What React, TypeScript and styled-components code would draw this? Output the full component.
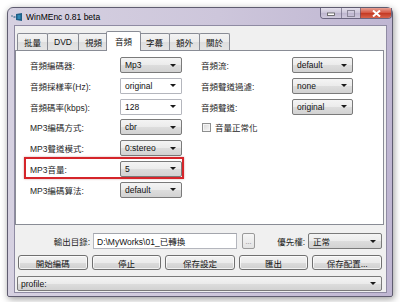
import React from 'react';
import styled, { createGlobalStyle, css } from 'styled-components';

const GlobalStyle = createGlobalStyle`
    html, body {
        margin: 0;
        padding: 0;
        background: #ffffff;
    }
    body {
        font-family: "Liberation Sans", "Noto Sans CJK TC", sans-serif;
        font-size: 8.5px;
        color: #1e1e1e;
    }
    * {
        box-sizing: border-box;
    }
`;

const Page = styled.div`
    width: 400px;
    height: 302px;
    padding: 7px 0 0 7px;
    overflow: hidden;
`;

const Window = styled.div`
    width: 386px;
    height: 290px;
    border: 1px solid #5f5c70;
    border-radius: 6px 6px 2px 2px;
    background: linear-gradient(to right, #d6d1e1, #cdc6db 55%, #bfb6d2);
    box-shadow: 1px 2px 7px rgba(0, 0, 0, 0.4);
    padding: 0 5px 3px 6px;
    display: flex;
    flex-direction: column;
`;

const TitleBar = styled.div`
    height: 17px;
    margin: 0 -5px 0 -3px;
    display: flex;
    align-items: center;
    flex-shrink: 0;
`;

const TitleText = styled.span`
    margin-left: 4px;
    font-size: 8.5px;
    color: #000;
    flex: 1;
`;

const CaptionGroup = styled.div`
    align-self: flex-start;
    display: flex;
    height: 11px;
    border: 1px solid #6b6680;
    border-top: none;
    border-radius: 0 0 4px 4px;
    overflow: hidden;
`;

const CaptionButton = styled.div<{ $w: number; $close?: boolean }>`
    width: ${(p) => p.$w}px;
    display: flex;
    align-items: center;
    justify-content: center;
    border-left: 1px solid rgba(90, 85, 110, 0.6);
    background: linear-gradient(#e4e0ec, #cbc5d9 50%, #bdb5cf 51%, #d0cadd);
    &:first-child {
        border-left: none;
    }
    ${(p) =>
        p.$close &&
        css`
            background: linear-gradient(#e8a195, #d4533f 50%, #c33822 51%, #d8634c);
        `}
`;

const Client = styled.div`
    flex: 1;
    background: #f0f0f0;
    border: 1px solid #8f8ba3;
    display: flex;
    flex-direction: column;
    padding: 5px 1px 0 0;
`;

const TabStrip = styled.div`
    display: flex;
    align-items: flex-end;
    height: 19px;
    padding-left: 2px;
`;

const Tab = styled.div<{ $active?: boolean }>`
    height: 17px;
    padding: 0 6px;
    margin-right: -1px;
    display: flex;
    align-items: center;
    border: 1px solid #898c95;
    border-bottom: none;
    border-radius: 2px 2px 0 0;
    background: linear-gradient(#f3f3f3, #ebebeb 50%, #dedede 51%, #e5e5e5);
    color: #111;
    ${(p) =>
        p.$active &&
        css`
            position: relative;
            z-index: 1;
            height: 20px;
            margin: 0 -2px -1px -2px;
            padding: 0 8px;
            background: #ffffff;
            padding-bottom: 2px;
        `}
`;

const Panel = styled.div`
    height: 175px;
    margin-right: 1px;
    border: 1px solid #898c95;
    background: #ffffff;
    padding: 6px 0 0 14px;
    display: flex;
    gap: 19px;
`;

const Column = styled.div`
    display: flex;
    flex-direction: column;
    gap: 4.8px;
`;

const Row = styled.div<{ $label: number; $field: number; $highlight?: boolean }>`
    display: grid;
    grid-template-columns: ${(p) => p.$label}px ${(p) => p.$field}px;
    align-items: center;
    height: 16px;
    ${(p) =>
        p.$highlight &&
        css`
            position: relative;
            &::after {
                content: '';
                position: absolute;
                inset: -4px -2px -2px -6px;
                border: 2px solid #d5252a;
                box-shadow: 0 0 2px rgba(120, 0, 0, 0.35);
            }
        `}
`;

const Label = styled.span`
    white-space: nowrap;
`;

const Combo = styled.div<{ $edit?: boolean; $w?: number }>`
    height: 16px;
    ${(p) => p.$w && `width: ${p.$w}px;`}
    display: flex;
    align-items: center;
    justify-content: space-between;
    padding: 0 5px 0 4px;
    border: 1px solid #7a7a7a;
    border-radius: 2px;
    background: linear-gradient(#f4f4f4, #ebebeb 50%, #dddddd 51%, #d2d2d2);
    color: #111;
    white-space: nowrap;
    ${(p) =>
        p.$edit &&
        css`
            background: #ffffff;
            border-color: #b4b6bd;
            border-radius: 1px;
        `}
`;

const Arrow = styled.span`
    width: 0;
    height: 0;
    border-left: 3px solid transparent;
    border-right: 3px solid transparent;
    border-top: 3px solid #1a1a1a;
`;

const CheckRow = styled.div`
    display: flex;
    align-items: center;
    gap: 4px;
    height: 16px;
    padding-left: 1px;
`;

const CheckBox = styled.span`
    width: 9px;
    height: 9px;
    border: 1px solid #8e8f8f;
    background: linear-gradient(135deg, #d8d8d8, #f7f7f7);
    box-shadow: inset 0 0 0 1px #f4f4f4;
`;

const Bottom = styled.div`
    display: flex;
    flex-direction: column;
    padding: 8px 3px 0 3px;
    gap: 6px;
`;

const OutputRow = styled.div`
    display: flex;
    align-items: center;
    height: 16px;
`;

const RightLabel = styled.span<{ $w: number }>`
    width: ${(p) => p.$w}px;
    text-align: right;
    margin-right: 3px;
    white-space: nowrap;
`;

const TextInput = styled.div`
    width: 144px;
    height: 16px;
    display: flex;
    align-items: center;
    padding-left: 3px;
    border: 1px solid #b4b6bd;
    border-top-color: #a3a5ac;
    background: #ffffff;
    color: #111;
    white-space: nowrap;
`;

const DotsButton = styled.div`
    width: 13px;
    height: 16px;
    margin-left: 5px;
    border: 1px solid #9a9a9a;
    border-radius: 2px;
    background: linear-gradient(#f6f6f6, #e3e3e3);
    color: #777;
    font-size: 7px;
    display: flex;
    align-items: center;
    justify-content: center;
`;

const Spacer = styled.div`
    flex: 1;
`;

const ButtonRow = styled.div`
    display: grid;
    grid-template-columns: repeat(5, 1fr);
    gap: 4px;
    height: 15px;
`;

const Button = styled.div`
    border: 1px solid #707070;
    border-radius: 3px;
    background: linear-gradient(#f2f2f2, #ebebeb 50%, #dddddd 51%, #cfcfcf);
    box-shadow: inset 0 0 0 1px rgba(255, 255, 255, 0.7);
    display: flex;
    align-items: center;
    justify-content: center;
    color: #111;
    white-space: nowrap;
`;

const ProfileCombo = styled(Combo)`
    height: 15px;
    margin-left: -1px;
    padding-left: 3px;
`;

const AppIcon = () => (
    <svg width="11" height="8" viewBox="0 0 11 8">
        <rect x="0" y="2" width="2" height="2" fill="#8fa3b8" />
        <rect x="2.5" y="3" width="2" height="2" fill="#6d8aa8" />
        <path d="M5 1 L11 0 L11 8 L5 7 Z" fill="#1f5f86" />
        <rect x="6.5" y="2" width="3" height="4" fill="#2f88b5" />
    </svg>
);

const leftRows = [
    { label: '音頻編碼器:', value: 'Mp3' },
    { label: '音頻採樣率(Hz):', value: 'original', edit: true },
    { label: '音頻碼率(kbps):', value: '128', edit: true },
    { label: 'MP3編碼方式:', value: 'cbr' },
    { label: 'MP3聲道模式:', value: '0:stereo' },
    { label: 'MP3音量:', value: '5', highlight: true },
    { label: 'MP3編碼算法:', value: 'default' },
];

const rightRows = [
    { label: '音頻流:', value: 'default' },
    { label: '音頻聲道過濾:', value: 'none' },
    { label: '音頻聲道:', value: 'original' },
];

const tabs = ['批量', 'DVD', '視頻', '音頻', '字幕', '額外', '關於'];

export default function App() {
    return (
        <Page>
            <GlobalStyle />
            <Window>
                <TitleBar>
                    <AppIcon />
                    <TitleText>WinMEnc 0.81 beta</TitleText>
                    <CaptionGroup>
                        <CaptionButton $w={20}>
                            <svg width="8" height="6" viewBox="0 0 8 6">
                                <rect x="0.5" y="3" width="7" height="2.5" fill="#fff" stroke="#555" strokeWidth="0.8" />
                            </svg>
                        </CaptionButton>
                        <CaptionButton $w={19}>
                            <svg width="8" height="7" viewBox="0 0 8 7">
                                <rect x="0.5" y="0.5" width="7" height="6" fill="none" stroke="#8a8698" strokeWidth="1" />
                            </svg>
                        </CaptionButton>
                        <CaptionButton $w={31} $close>
                            <svg width="9" height="7" viewBox="0 0 9 7">
                                <path d="M1 0.5 L8 6.5 M8 0.5 L1 6.5" stroke="#fff" strokeWidth="2" />
                            </svg>
                        </CaptionButton>
                    </CaptionGroup>
                </TitleBar>
                <Client>
                    <TabStrip>
                        {tabs.map((t) => (
                            <Tab key={t} $active={t === '音頻'}>
                                {t}
                            </Tab>
                        ))}
                    </TabStrip>
                    <Panel>
                        <Column>
                            {leftRows.map((r) => (
                                <Row key={r.label} $label={90} $field={62} $highlight={r.highlight}>
                                    <Label>{r.label}</Label>
                                    <Combo $edit={r.edit}>
                                        {r.value}
                                        <Arrow />
                                    </Combo>
                                </Row>
                            ))}
                        </Column>
                        <Column>
                            {rightRows.map((r) => (
                                <Row key={r.label} $label={91} $field={61}>
                                    <Label>{r.label}</Label>
                                    <Combo>
                                        {r.value}
                                        <Arrow />
                                    </Combo>
                                </Row>
                            ))}
                            <CheckRow>
                                <CheckBox />
                                <Label>音量正常化</Label>
                            </CheckRow>
                        </Column>
                    </Panel>
                    <Bottom>
                        <OutputRow>
                            <RightLabel $w={72}>輸出目錄:</RightLabel>
                            <TextInput>D:\MyWorks\01_已轉換</TextInput>
                            <DotsButton>...</DotsButton>
                            <Spacer />
                            <RightLabel $w={40}>優先權:</RightLabel>
                            <Combo $w={74}>
                                正常
                                <Arrow />
                            </Combo>
                        </OutputRow>
                        <ButtonRow>
                            <Button>開始編碼</Button>
                            <Button>停止</Button>
                            <Button>保存設定</Button>
                            <Button>匯出</Button>
                            <Button>保存配置...</Button>
                        </ButtonRow>
                        <ProfileCombo>
                            profile:
                            <Arrow />
                        </ProfileCombo>
                    </Bottom>
                </Client>
            </Window>
        </Page>
    );
}
